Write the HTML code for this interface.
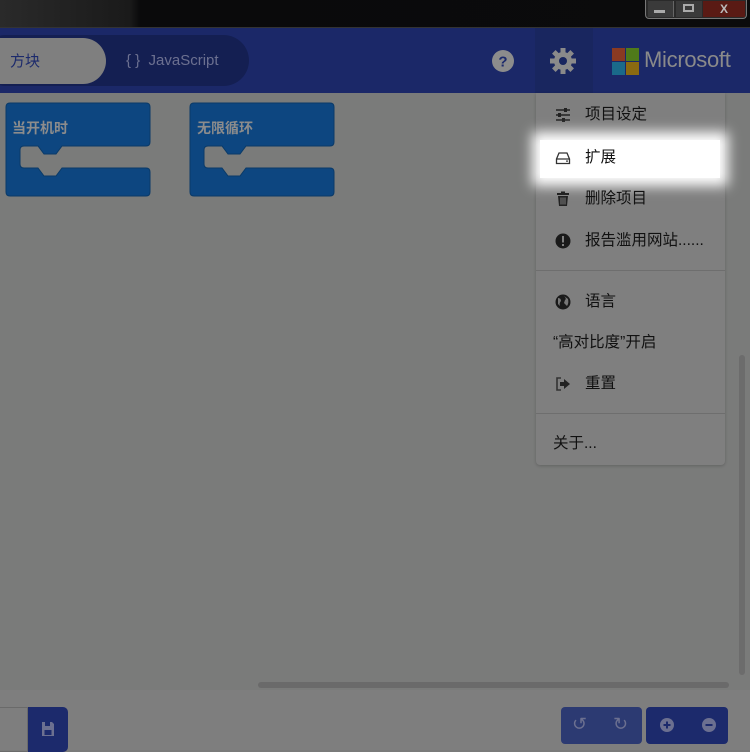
<!DOCTYPE html>
<html><head><meta charset="utf-8"><style>
*{margin:0;padding:0;box-sizing:border-box}
body{width:750px;height:750px;overflow:hidden;position:relative;background:#7a7b7a;font-family:"Liberation Sans","Noto Sans CJK SC",sans-serif}
.abs{position:absolute}
.title{left:0;top:0;width:750px;height:28px;background:linear-gradient(90deg,#2a2a2a 0,#1a1a1a 130px,#0a0a0b 140px,#0b0b0c 100%);border-bottom:1px solid #333}
.hdr{left:0;top:28px;width:750px;height:65px;background:#1b2868}
.menu{left:536px;top:93px;width:189px;height:372px;background:#7f7f7f;border-radius:0 0 4px 4px;box-shadow:0 1px 3px rgba(0,0,0,.2)}
.it{position:absolute;left:0;width:189px;height:40px;font-size:15.5px;color:#111;line-height:40px}
.it span{position:absolute;left:49px}
.ic{position:absolute;left:19px;top:12px;width:16px;height:16px}
.sep{position:absolute;left:0;width:189px;height:1px;background:#6e6e6e}
</style></head><body>
<div class="abs title"></div>
<div class="abs" style="left:645px;top:0;width:102px;height:19px;border:1px solid #777;border-top:none;border-radius:0 0 4px 4px;background:#2a2a2a"></div>
<div class="abs" style="left:648px;top:1px;width:26px;height:16px;background:#3a3a3a;border-right:1px solid #666"></div>
<div class="abs" style="left:654px;top:10px;width:11px;height:3px;background:#aaa"></div>
<div class="abs" style="left:676px;top:1px;width:26px;height:16px;background:#3a3a3a"></div>
<div class="abs" style="left:683px;top:4px;width:11px;height:8px;border:2px solid #aaa"></div>
<div class="abs" style="left:703px;top:1px;width:42px;height:16px;background:#5a1a14;color:#bbb;font-size:12px;font-weight:bold;text-align:center;line-height:16px">X</div>
<div class="abs hdr"></div>
<div class="abs" style="left:-20px;top:35px;width:269px;height:51px;background:#141f52;border-radius:26px"></div>
<div class="abs" style="left:-20px;top:38px;width:126px;height:46px;background:#7f7f7f;border-radius:0 23px 23px 0"></div>
<div class="abs" style="left:10px;top:50px;font-size:15px;color:#1c2a6c">方块</div>
<div class="abs" style="left:126px;top:52px;font-size:15px;color:#6c7090">{ }&nbsp; JavaScript</div>
<svg class="abs" style="left:491px;top:49px" width="24" height="24"><circle cx="12" cy="12" r="11" fill="#8c8c8c"/><text x="12" y="17.5" font-size="15" font-weight="bold" text-anchor="middle" fill="#1c2a6c" font-family="Liberation Sans">?</text></svg>
<div class="abs" style="left:535px;top:28px;width:58px;height:65px;background:#19265f"></div>
<svg class="abs" style="left:549px;top:47px" width="28" height="28" viewBox="0 0 28 28"><g fill="#8a8a8a"><circle cx="14" cy="14" r="9"/><g id="t"><rect x="11.5" y="1" width="5" height="6"/><rect x="11.5" y="21" width="5" height="6"/></g><use href="#t" transform="rotate(45 14 14)"/><use href="#t" transform="rotate(90 14 14)"/><use href="#t" transform="rotate(135 14 14)"/></g><circle cx="14" cy="14" r="4" fill="#19265f"/></svg>
<div class="abs" style="left:612px;top:48px;width:13px;height:13px;background:#8a3a22"></div>
<div class="abs" style="left:626px;top:48px;width:13px;height:13px;background:#4f7a1a"></div>
<div class="abs" style="left:612px;top:62px;width:13px;height:13px;background:#1a6a8a"></div>
<div class="abs" style="left:626px;top:62px;width:13px;height:13px;background:#8a6a10"></div>
<div class="abs" style="left:644px;top:47px;font-size:22px;color:#8a8a8a;letter-spacing:-0.3px">Microsoft</div>

<svg class="abs" style="left:5px;top:102px" width="148" height="97"><path transform="translate(1 1)" d="M4 0 H140 Q144 0 144 4 V39 Q144 43 140 43 H56 L50 51 H38 L32 43 H18 Q14 43 14 47 V61 Q14 65 18 65 H32 L38 73 H50 L56 65 H140 Q144 65 144 69 V89 Q144 93 140 93 H4 Q0 93 0 89 V4 Q0 0 4 0 Z" fill="#0d4680" stroke="#0a3a68"/></svg>
<div class="abs" style="left:12px;top:118px;font-size:14px;font-weight:bold;color:#8c8c8c">当开机时</div>
<svg class="abs" style="left:189px;top:102px" width="148" height="97"><path transform="translate(1 1)" d="M4 0 H140 Q144 0 144 4 V39 Q144 43 140 43 H56 L50 51 H38 L32 43 H18 Q14 43 14 47 V61 Q14 65 18 65 H32 L38 73 H50 L56 65 H140 Q144 65 144 69 V89 Q144 93 140 93 H4 Q0 93 0 89 V4 Q0 0 4 0 Z" fill="#0d4680" stroke="#0a3a68"/></svg>
<div class="abs" style="left:197px;top:118px;font-size:14px;font-weight:bold;color:#8c8c8c">无限循环</div>

<div class="abs menu">
 <div class="it" style="top:2px"><svg class="ic" viewBox="0 0 16 16"><g stroke="#222" stroke-width="1.6"><path d="M1 3H15M1 8H15M1 13H15"/></g><g fill="#222"><rect x="9" y="1" width="3" height="4"/><rect x="3" y="6" width="3" height="4"/><rect x="7" y="11" width="3" height="4"/></g></svg><span>项目设定</span></div>
 <div style="position:absolute;left:4px;top:47px;width:180px;height:38px;background:#fff;box-shadow:0 0 12px 8px #fff"></div>
 <div class="it" style="top:45px"><svg class="ic" viewBox="0 0 16 16"><path d="M1.5 9 L4 3 H12 L14.5 9 V13.5 H1.5 Z M1.5 9 H14.5" fill="none" stroke="#333" stroke-width="1.3"/><rect x="11" y="10.5" width="2" height="1.2" fill="#333"/></svg><span>扩展</span></div>
 <div class="it" style="top:86px"><svg class="ic" viewBox="0 0 16 16"><rect x="2" y="2" width="12" height="2" fill="#222"/><rect x="6" y="0.5" width="4" height="2" fill="#222"/><path d="M3 5H13L12 15H4Z" fill="#222"/><path d="M6 6.5V13.5M8 6.5V13.5M10 6.5V13.5" stroke="#7f7f7f"/></svg><span>删除项目</span></div>
 <div class="it" style="top:128px"><svg class="ic" viewBox="0 0 16 16"><circle cx="8" cy="8" r="7.5" fill="#1a1a1a"/><rect x="7" y="3" width="2" height="6.5" fill="#7f7f7f"/><rect x="7" y="11" width="2" height="2" fill="#7f7f7f"/></svg><span>报告滥用网站......</span></div>
 <div class="sep" style="top:177px"></div>
 <div class="it" style="top:189px"><svg class="ic" viewBox="0 0 16 16"><circle cx="8" cy="8" r="7.5" fill="#1a1a1a"/><path d="M3 4 Q6 4 6 7 Q4 9 5 12 L3 10 Z M9 2 Q12 5 10 6 L9 9 L12 12 Q14 9 13 5Z" fill="#777"/></svg><span>语言</span></div>
 <div class="it" style="top:230px"><span style="left:17px">“高对比度”开启</span></div>
 <div class="it" style="top:271px"><svg class="ic" viewBox="0 0 16 16"><path d="M6 2H2V14H6" fill="none" stroke="#333" stroke-width="1.6"/><path d="M5 6H9V3L15 8L9 13V10H5Z" fill="#222"/></svg><span>重置</span></div>
 <div class="sep" style="top:320px"></div>
 <div class="it" style="top:331px"><span style="left:17px">关于...</span></div>
</div>

<div class="abs" style="left:739px;top:355px;width:6px;height:320px;background:#6c6c6c;border-radius:3px"></div>
<div class="abs" style="left:258px;top:682px;width:471px;height:6px;background:#6a6a6a;border-radius:3px"></div>
<div class="abs" style="left:0;top:690px;width:750px;height:60px;background:#7e7e7e"></div>
<div class="abs" style="left:0;top:707px;width:28px;height:45px;border:1px solid #6a6a6a;border-left:none"></div>
<div class="abs" style="left:28px;top:707px;width:40px;height:45px;background:#1c2a6c;border-radius:0 5px 5px 0"></div>
<svg class="abs" style="left:41px;top:721px" width="14" height="16"><path d="M1 1H11L13 3V15H1Z" fill="#6c7090"/><rect x="4" y="1" width="5" height="4" fill="#1c2a6c"/><rect x="3.5" y="9" width="7" height="5" fill="#1c2a6c"/></svg>
<div class="abs" style="left:561px;top:707px;width:81px;height:37px;background:#2c3a72;border-radius:4px"></div>
<div class="abs" style="left:572px;top:714px;font-size:18px;color:#6c7090">↺</div>
<div class="abs" style="left:613px;top:714px;font-size:18px;color:#6c7090">↻</div>
<div class="abs" style="left:646px;top:707px;width:82px;height:37px;background:#1c2a6c;border-radius:4px"></div>
<svg class="abs" style="left:659px;top:716px" width="60" height="18"><circle cx="8" cy="9" r="7" fill="#6c7090"/><path d="M4.5 9H11.5M8 5.5V12.5" stroke="#1c2a6c" stroke-width="2"/><circle cx="50" cy="9" r="7" fill="#6c7090"/><path d="M46.5 9H53.5" stroke="#1c2a6c" stroke-width="2"/></svg>
</body></html>
